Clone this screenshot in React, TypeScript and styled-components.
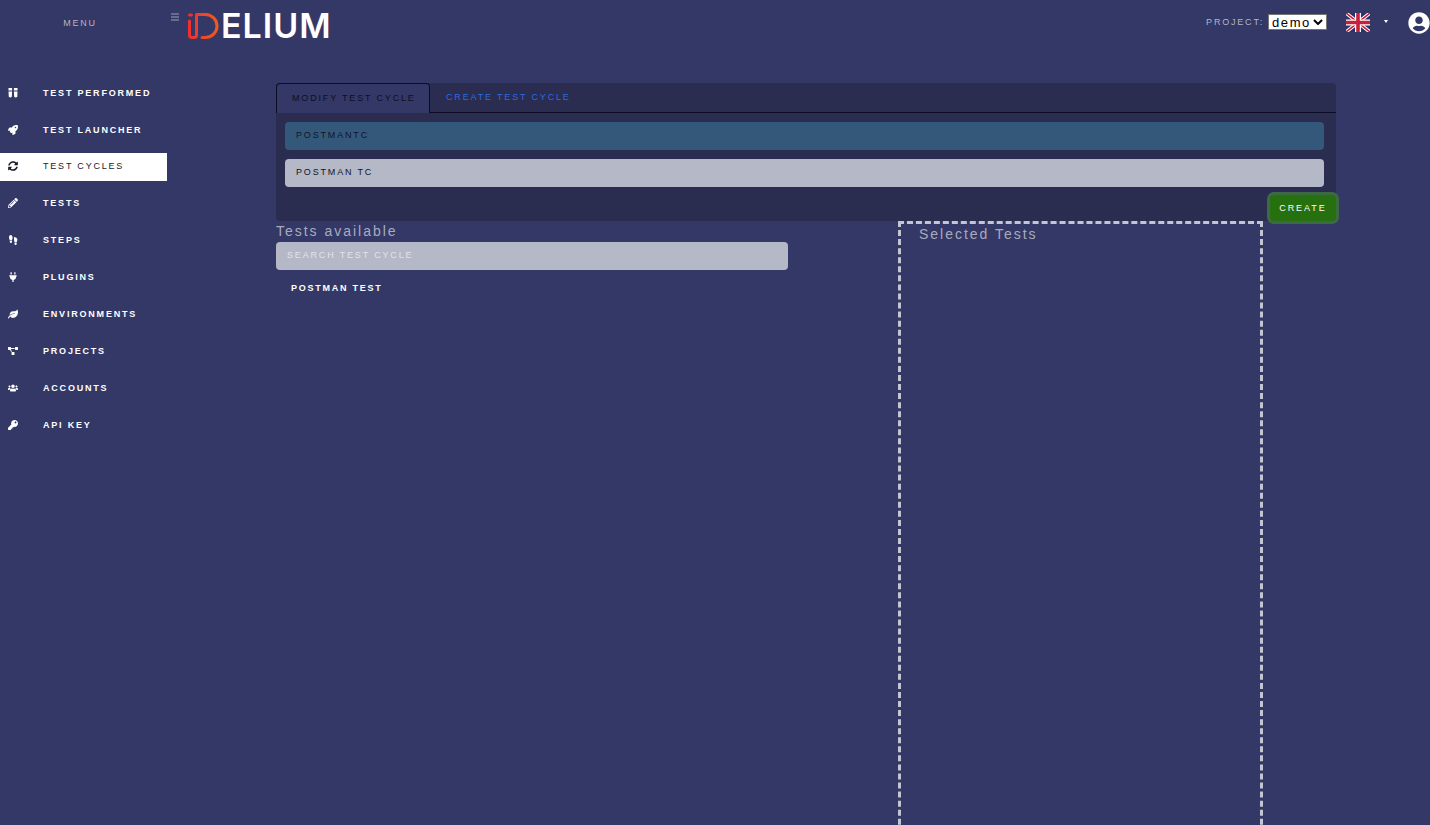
import React from "react";
import styled, { createGlobalStyle } from "styled-components";
import {
  FaRocket, FaSyncAlt, FaPencilAlt, FaPlug, FaLeaf, FaProjectDiagram, FaUsers, FaKey, FaUserCircle,
} from "react-icons/fa";

const GlobalStyle = createGlobalStyle`
  html, body { margin: 0; padding: 0; height: 100%; overflow: hidden; background: #343866; }
  body { font-family: "Liberation Sans", Arial, sans-serif; }
  * { box-sizing: border-box; }
`;

const Page = styled.div`
  width: 1430px;
  height: 825px;
  overflow: hidden;
  background: #343866;
  display: flex;
  flex-direction: column;
`;

const Header = styled.header`
  height: 52px;
  flex: none;
  display: flex;
  align-items: flex-start;
`;

const MenuLabel = styled.div`
  width: 160px;
  padding-top: 18px;
  text-align: center;
  font-size: 9px;
  line-height: 11px;
  letter-spacing: 1.8px;
  color: #b3b5c5;
`;

const Hamburger = styled.svg`
  width: 8px;
  height: 8px;
  margin: 13px 0 0 11px;
  flex: none;
`;

const Logo = styled.div`
  margin: 11px 0 0 8px;
  display: flex;
  align-items: flex-start;
`;

const LogoWord = styled.span`
  font-family: "Inter", "Liberation Sans", sans-serif;
  font-size: 34px;
  line-height: 29px;
  font-weight: 600;
  letter-spacing: 1px;
  color: #ffffff;
`;

const HeaderRight = styled.div`
  margin-left: auto;
  display: flex;
  align-items: flex-start;
`;

const ProjectLabel = styled.span`
  margin-top: 17px;
  font-size: 9px;
  line-height: 11px;
  letter-spacing: 1.8px;
  color: #b3b5c5;
`;

const SelectWrap = styled.div`
  position: relative;
  margin: 14px 0 0 4px;
  width: 59px;
  height: 16px;
  svg {
    position: absolute;
    right: 4px;
    top: 5px;
    pointer-events: none;
  }
`;

const ProjectSelect = styled.select`
  appearance: none;
  display: block;
  width: 100%;
  height: 100%;
  padding: 0 0 0 3px;
  background: #ffffff;
  color: #000000;
  border: 1px solid #767676;
  border-radius: 0;
  font-family: "Liberation Sans", sans-serif;
  font-size: 13px;
  letter-spacing: 1.6px;
`;

const Flag = styled.svg`
  width: 24px;
  height: 19px;
  margin: 13px 0 0 19px;
`;

const Caret = styled.span`
  width: 0;
  height: 0;
  margin: 20px 0 0 14px;
  border-left: 2.5px solid transparent;
  border-right: 2.5px solid transparent;
  border-top: 3px solid #fff;
`;

const UserIcon = styled(FaUserCircle)`
  width: 22px;
  height: 22px;
  margin: 12px 0 0 20px;
  color: #fff;
`;

const Body = styled.div`
  flex: 1;
  display: flex;
  min-height: 0;
`;

const Sidebar = styled.nav`
  width: 167px;
  flex: none;
  padding-top: 27.3px;
  display: flex;
  flex-direction: column;
  gap: 9px;
`;

const NavItem = styled.div<{ $active?: boolean }>`
  height: 27.9px;
  display: flex;
  align-items: center;
  padding: 0 0 ${(p) => (p.$active ? "3px" : "1px")} 8px;
  background: ${(p) => (p.$active ? "#ffffff" : "transparent")};
  color: ${(p) => (p.$active ? "#1a1a2a" : "#ffffff")};
  font-size: 9px;
  font-weight: ${(p) => (p.$active ? 400 : 700)};
  letter-spacing: 1.8px;
`;

const NavIcon = styled.span`
  width: 35px;
  flex: none;
  display: flex;
  align-items: center;
  svg { height: 10px; width: auto; max-width: 13px; display: block; }
`;

const Main = styled.main`
  flex: 1;
  min-width: 0;
  padding: 31px 94px 0 109px;
  display: flex;
  flex-direction: column;
`;

const Panel = styled.section`
  height: 138px;
  flex: none;
  position: relative;
  background: #2a2c50;
  border-radius: 4px;
`;

const Tabs = styled.div`
  height: 30px;
  display: flex;
  border-bottom: 1px solid #0c0d24;
`;

const Tab = styled.div<{ $active?: boolean }>`
  height: ${(p) => (p.$active ? "30px" : "29px")};
  padding: 0 15px 2px;
  margin-left: ${(p) => (p.$active ? "0" : "1px")};
  width: ${(p) => (p.$active ? "154px" : "auto")};
  display: flex;
  align-items: center;
  font-size: 9px;
  letter-spacing: 1.83px;
  white-space: nowrap;
  color: ${(p) => (p.$active ? "#0e0f24" : "#2a6be0")};
  background: ${(p) => (p.$active ? "#343866" : "transparent")};
  border: ${(p) => (p.$active ? "1px solid #0c0d24" : "none")};
  border-bottom: none;
  border-radius: 4px 4px 0 0;
`;

const Fields = styled.div`
  padding: 9px 12px 0 9px;
  display: flex;
  flex-direction: column;
  gap: 9px;
`;

const Field = styled.div<{ $tone: "teal" | "grey" }>`
  height: 28px;
  padding: 0 11px;
  display: flex;
  align-items: center;
  padding-bottom: ${(p) => (p.$tone === "teal" ? "3px" : "2px")};
  border-radius: 4px;
  background: ${(p) => (p.$tone === "teal" ? "#34587a" : "#b5b8c6")};
  font-size: 9px;
  letter-spacing: 1.83px;
  color: #12132a;
`;

const CreateButton = styled.button`
  position: absolute;
  right: 0;
  bottom: 0;
  width: 66px;
  height: 26px;
  padding: 0;
  border: none;
  border-radius: 4px;
  background: #267010;
  box-shadow: 0 0 0 3px #3c6a42;
  color: #fff;
  font-family: "Liberation Sans", sans-serif;
  font-size: 9px;
  font-weight: 400;
  letter-spacing: 1.95px;
`;

const Columns = styled.div`
  flex: 1;
  min-height: 0;
  display: flex;
  align-items: stretch;
`;

const LeftColumn = styled.div`
  width: 512px;
  flex: none;
`;

const ColumnTitle = styled.h2`
  margin: 0;
  font-size: 14px;
  line-height: 16px;
  font-weight: 400;
  letter-spacing: 1.98px;
  color: #a9abbd;
`;

const AvailableTitle = styled(ColumnTitle)`
  padding-top: 2px;
  height: 21px;
`;

const SearchBox = styled.div`
  height: 28px;
  padding: 0 11px 3px;
  display: flex;
  align-items: center;
  border-radius: 4px;
  background: #b5b8c6;
  font-size: 9px;
  letter-spacing: 1.83px;
  color: #e2e3ea;
`;

const TestRow = styled.div`
  padding: 13px 0 0 15px;
  font-size: 9px;
  line-height: 11px;
  font-weight: 700;
  letter-spacing: 1.75px;
  color: #fff;
`;

const DropZone = styled.div`
  width: 365px;
  height: 640px;
  flex: none;
  margin-left: 110px;
  padding: 2px 0 0 18px;
  border: 3px dashed #c3c5d2;
  border-bottom: none;
`;

const PerformedIcon = () => (
  <svg viewBox="0 0 10 10" fill="currentColor">
    <path d="M0.5 0h3.6v2.6H0.5zM0.5 3.4h3.6l-.3 5.4q-1.5 1.2-3 0zM5.9 0h3.6v2.6H5.9zM5.9 3.4h3.6l-.2 5.4q-1.5 1.2-3.1 0z" />
  </svg>
);

const StepsIcon = () => (
  <svg viewBox="-1 0 10 10" fill="currentColor">
    <path d="M0 2.6C0 .8.8 0 1.7 0s1.9 1 1.9 2.6c0 1.2-.5 2-.6 2.6H.7C.6 4.6 0 3.8 0 2.6zM.8 5.8H3v1q0 1.2-1.1 1.2T.8 6.8z" />
    <path d="M5 1.9h0C6 1.9 8.4 2.6 8.4 4.6c0 1.2-.6 2-.7 2.6H5.5C5.4 6.600 5 5.800 5 4.600zM5.500 7.800h2.200v1q0 1.200-1.100 1.200T5.500 8.800z" />
  </svg>
);

const navItems: { label: string; icon: React.ReactNode; active?: boolean }[] = [
  { label: "TEST PERFORMED", icon: <PerformedIcon /> },
  { label: "TEST LAUNCHER", icon: <FaRocket /> },
  { label: "TEST CYCLES", icon: <FaSyncAlt />, active: true },
  { label: "TESTS", icon: <FaPencilAlt /> },
  { label: "STEPS", icon: <StepsIcon /> },
  { label: "PLUGINS", icon: <FaPlug /> },
  { label: "ENVIRONMENTS", icon: <FaLeaf /> },
  { label: "PROJECTS", icon: <FaProjectDiagram /> },
  { label: "ACCOUNTS", icon: <FaUsers /> },
  { label: "API KEY", icon: <FaKey /> },
];

export default function App() {
  return (
    <Page>
      <GlobalStyle />
      <Header>
        <MenuLabel>MENU</MenuLabel>
        <Hamburger viewBox="0 0 8 8" stroke="#b9bbcb" strokeWidth="0.8">
          <path d="M0 1h8M0 4h8M0 7h8" />
        </Hamburger>
        <Logo>
          <svg width="34" height="29" viewBox="0 0 34 29" fill="none">
            <defs>
              <linearGradient id="logoGrad" x1="0" x2="1" y1="0" y2="0">
                <stop offset="0" stopColor="#f0302e" />
                <stop offset="1" stopColor="#f05a1e" />
              </linearGradient>
            </defs>
            <path
              d="M2.5 10v14q0 2.500 2.500 2.500h2q2.500 0 2.500-2.500V3.500M9.500 3.500h9a11.500 11.500 0 0 1 0 23H15"
              stroke="url(#logoGrad)"
              strokeWidth="3"
              strokeLinecap="round"
            />
            <path d="M2.5 4h2" stroke="#f0302e" strokeWidth="3" strokeLinecap="round" />
          </svg>
          <LogoWord>ELIUM</LogoWord>
        </Logo>
        <HeaderRight>
          <ProjectLabel>PROJECT:</ProjectLabel>
          <SelectWrap>
            <ProjectSelect defaultValue="demo">
              <option value="demo">demo</option>
            </ProjectSelect>
            <svg width="10" height="6" viewBox="0 0 10 6" fill="none" stroke="#000" strokeWidth="2">
              <path d="M1 1l4 4 4-4" />
            </svg>
          </SelectWrap>
          <Flag viewBox="0 0 60 48" preserveAspectRatio="none">
            <rect width="60" height="48" fill="#27336f" />
            <path d="M0 0L60 48M60 0L0 48" stroke="#fff" strokeWidth="9" />
            <path d="M0 0L60 48M60 0L0 48" stroke="#c8203a" strokeWidth="4" />
            <path d="M30 0V48M0 24H60" stroke="#fff" strokeWidth="15" />
            <path d="M30 0V48M0 24H60" stroke="#c8203a" strokeWidth="9" />
          </Flag>
          <Caret />
          <UserIcon />
        </HeaderRight>
      </Header>
      <Body>
        <Sidebar>
          {navItems.map((item) => (
            <NavItem key={item.label} $active={item.active}>
              <NavIcon>{item.icon}</NavIcon>
              {item.label}
            </NavItem>
          ))}
        </Sidebar>
        <Main>
          <Panel>
            <Tabs>
              <Tab $active>MODIFY TEST CYCLE</Tab>
              <Tab>CREATE TEST CYCLE</Tab>
            </Tabs>
            <Fields>
              <Field $tone="teal">POSTMANTC</Field>
              <Field $tone="grey">POSTMAN TC</Field>
            </Fields>
            <CreateButton>CREATE</CreateButton>
          </Panel>
          <Columns>
            <LeftColumn>
              <AvailableTitle>Tests available</AvailableTitle>
              <SearchBox>SEARCH TEST CYCLE</SearchBox>
              <TestRow>POSTMAN TEST</TestRow>
            </LeftColumn>
            <DropZone>
              <ColumnTitle>Selected Tests</ColumnTitle>
            </DropZone>
          </Columns>
        </Main>
      </Body>
    </Page>
  );
}
